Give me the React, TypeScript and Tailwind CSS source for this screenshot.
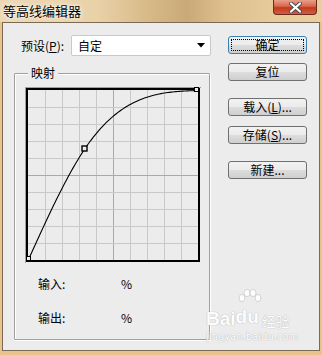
import React from "react";

const font = { fontFamily: '"Noto Sans CJK SC", "Noto Sans", sans-serif' };

function splinePath() {
  // natural cubic spline through (0,0), (85,167), (255,255)
  const x0 = 0, x1 = 85, x2 = 255;
  const y0 = 0, y1 = 167, y2 = 255;
  const h0 = x1 - x0, h1 = x2 - x1;
  const M1 = (6 * ((y2 - y1) / h1 - (y1 - y0) / h0)) / (2 * (h0 + h1));
  const S = (x: number) => {
    if (x <= x1) {
      return (M1 * Math.pow(x - x0, 3)) / (6 * h0) + (y0 / h0) * (x1 - x) + (y1 / h0 - (M1 * h0) / 6) * (x - x0);
    }
    return (M1 * Math.pow(x2 - x, 3)) / (6 * h1) + (y1 / h1 - (M1 * h1) / 6) * (x2 - x) + (y2 / h1) * (x - x1);
  };
  let d = "";
  for (let cx = 0; cx <= 255; cx += 2.5) {
    const cy = Math.min(255, Math.max(0, S(cx)));
    const sx = 3.5 + (cx * 169) / 255;
    const sy = 173.5 - (cy * 169) / 255;
    d += (d ? " L" : "M") + sx.toFixed(2) + "," + sy.toFixed(2);
  }
  return d;
}

function Graph() {
  const lines = [0, 1, 2, 3, 4, 5, 6, 7, 8];
  return (
    <svg width="177" height="177" viewBox="0 0 177 177" className="block">
      <line x1="0.5" y1="1" x2="0.5" y2="177" stroke="#a0a0a0" />
      <line x1="0" y1="1.5" x2="176" y2="1.5" stroke="#a0a0a0" />
      {lines.map((k) => (
        <line
          key={"v" + k}
          x1={20.5 + 17 * k}
          y1="4"
          x2={20.5 + 17 * k}
          y2="174"
          stroke={k === 4 ? "#a9a9a9" : "#c9c9c9"}
        />
      ))}
      {lines.map((k) => (
        <line
          key={"h" + k}
          x1="3"
          y1={21.5 + 17 * k}
          x2="173"
          y2={21.5 + 17 * k}
          stroke={k === 4 ? "#a9a9a9" : "#c9c9c9"}
        />
      ))}
      <rect x="2" y="3" width="172" height="172" fill="none" stroke="#000" strokeWidth="2" />
      <path d={splinePath()} fill="none" stroke="#000" strokeWidth="1.1" />
      <rect x="1.5" y="170.5" width="4" height="4" fill="#ececec" stroke="#000" />
      <rect x="57" y="60" width="5" height="5" fill="#ececec" stroke="#000" strokeWidth="1.4" />
      <rect x="169.5" y="1.5" width="4" height="4" fill="#ececec" stroke="#000" />
    </svg>
  );
}

function Btn({ label, def, className = "" }: { label: React.ReactNode; def?: boolean; className?: string }) {
  return (
    <div
      className={
        "relative h-[18px] w-[79px] rounded-[3px] border flex items-center justify-center text-[12px] leading-none text-black " +
        (def ? "border-[#3c7fb1] " : "border-[#707070] ") +
        "bg-[linear-gradient(180deg,#f2f2f2_0%,#ebebeb_50%,#dddddd_51%,#cfcfcf_100%)] " +
        className
      }
      style={font}
    >
      {def && <div className="absolute inset-[2px] border border-dotted border-black" />}
      <span className="relative">{label}</span>
    </div>
  );
}

export default function App() {
  return (
    <div
      className="w-[322px] h-[355px] flex flex-col relative overflow-hidden bg-[#e8c48c]"
      style={font}
    >
      {/* title bar */}
      <div className="h-[22px] flex items-start justify-between bg-[linear-gradient(90deg,#ecd8b4_0%,#e9d2a8_30%,#d9bb8a_45%,#c9a977_58%,#dfc08e_70%,#e6cb9c_85%,#e9cf9f_100%)]">
        <div className="pl-[3px] pt-[3px] text-[13px] leading-[15px] text-black [text-shadow:0_0_6px_#fff,0_0_3px_#fff]">
          等高线编辑器
        </div>
        <div className="mr-[5px] w-[44px] h-[15px] rounded-b-[4px] border border-t-0 border-[#6b2a1c] bg-[linear-gradient(180deg,#e8a08c_0%,#d9664a_45%,#c23a1c_55%,#d0603e_100%)] flex items-center justify-center">
          <svg width="13" height="11" viewBox="0 0 13 11">
            <path d="M2 1.5 L11 9.5 M11 1.5 L2 9.5" stroke="#4a4a4a" strokeWidth="4" strokeLinecap="round" />
            <path d="M2 1.5 L11 9.5 M11 1.5 L2 9.5" stroke="#fff" strokeWidth="2.2" strokeLinecap="round" />
          </svg>
        </div>
      </div>
      {/* client */}
      <div className="mx-[2px] h-[329px] border border-[#7a6a55] bg-[#ececec] flex pt-[12px]">
        <div className="ml-[11px] w-[197px] flex flex-col">
          <div className="h-[21px] flex items-center">
            <div className="ml-[7px] w-[50px] text-[12px] leading-none">
              预设(<span className="underline">P</span>):
            </div>
            <div className="w-[140px] h-[21px] bg-white border border-[#c9c9c9] rounded-[2px] flex items-center justify-between pl-[6px] pr-[5px]">
              <span className="text-[12px] leading-none">自定</span>
              <svg width="8" height="5" viewBox="0 0 8 5">
                <path d="M0 0 H8 L4 4.5 Z" fill="#000" />
              </svg>
            </div>
          </div>
          <div className="mt-[17px] h-[267px] w-[196px] relative border border-[#a0a0a0] shadow-[1px_1px_0_#fff,inset_1px_1px_0_#fff] rounded-[1px]">
            <div className="absolute -top-[8px] left-[13px] px-[3px] bg-[#ececec] text-[12px] leading-[14px]">映射</div>
            <div className="ml-[10px] mt-[12px]">
              <Graph />
            </div>
            <div className="mt-[14px] flex items-center h-[14px] text-[12px] leading-none">
              <span className="ml-[23px] w-[83px]">输入:</span>
              <span>%</span>
            </div>
            <div className="mt-[20px] flex items-center h-[14px] text-[12px] leading-none">
              <span className="ml-[23px] w-[83px]">输出:</span>
              <span>%</span>
            </div>
          </div>
        </div>
        <div className="ml-[17px] flex flex-col pt-[1px]">
          <Btn label="确定" def />
          <Btn label="复位" className="mt-[9px]" />
          <Btn
            label={
              <>
                载入(<span className="underline">L</span>)...
              </>
            }
            className="mt-[17px]"
          />
          <Btn
            label={
              <>
                存储(<span className="underline">S</span>)...
              </>
            }
            className="mt-[10px]"
          />
          <Btn label="新建..." className="mt-[17px]" />
        </div>
      </div>
      {/* watermark */}
      <div className="absolute left-[206px] top-[311px] pointer-events-none text-white opacity-90 [text-shadow:0_0_1px_#b8b8b8,0_0_1px_#b8b8b8]">
        <div className="flex items-end h-[17px]">
          <span className="text-[19px] font-bold leading-none" style={{ fontFamily: '"Liberation Sans", Arial, sans-serif' }}>
            Bai
          </span>
          <div className="relative">
            <svg width="28" height="18" viewBox="0 0 28 18" className="absolute -top-[15px] left-[0px]">
              <g fill="#fff" stroke="#c8c8c8" strokeWidth="0.8">
                <ellipse cx="6" cy="9" rx="3" ry="3.6" />
                <ellipse cx="11" cy="4" rx="3" ry="3.6" />
                <ellipse cx="17" cy="4" rx="3" ry="3.6" />
                <ellipse cx="22" cy="9" rx="3" ry="3.6" />
              </g>
            </svg>
            <span className="text-[19px] font-bold leading-none" style={{ fontFamily: '"Liberation Sans", Arial, sans-serif' }}>
              du
            </span>
          </div>
          <span className="ml-[3px] text-[14px] leading-none">经验</span>
        </div>
        <div className="text-[10px] leading-[11px] mt-[3px]" style={{ fontFamily: '"DejaVu Sans", sans-serif' }}>
          jingyan.baidu.com
        </div>
      </div>
    </div>
  );
}
